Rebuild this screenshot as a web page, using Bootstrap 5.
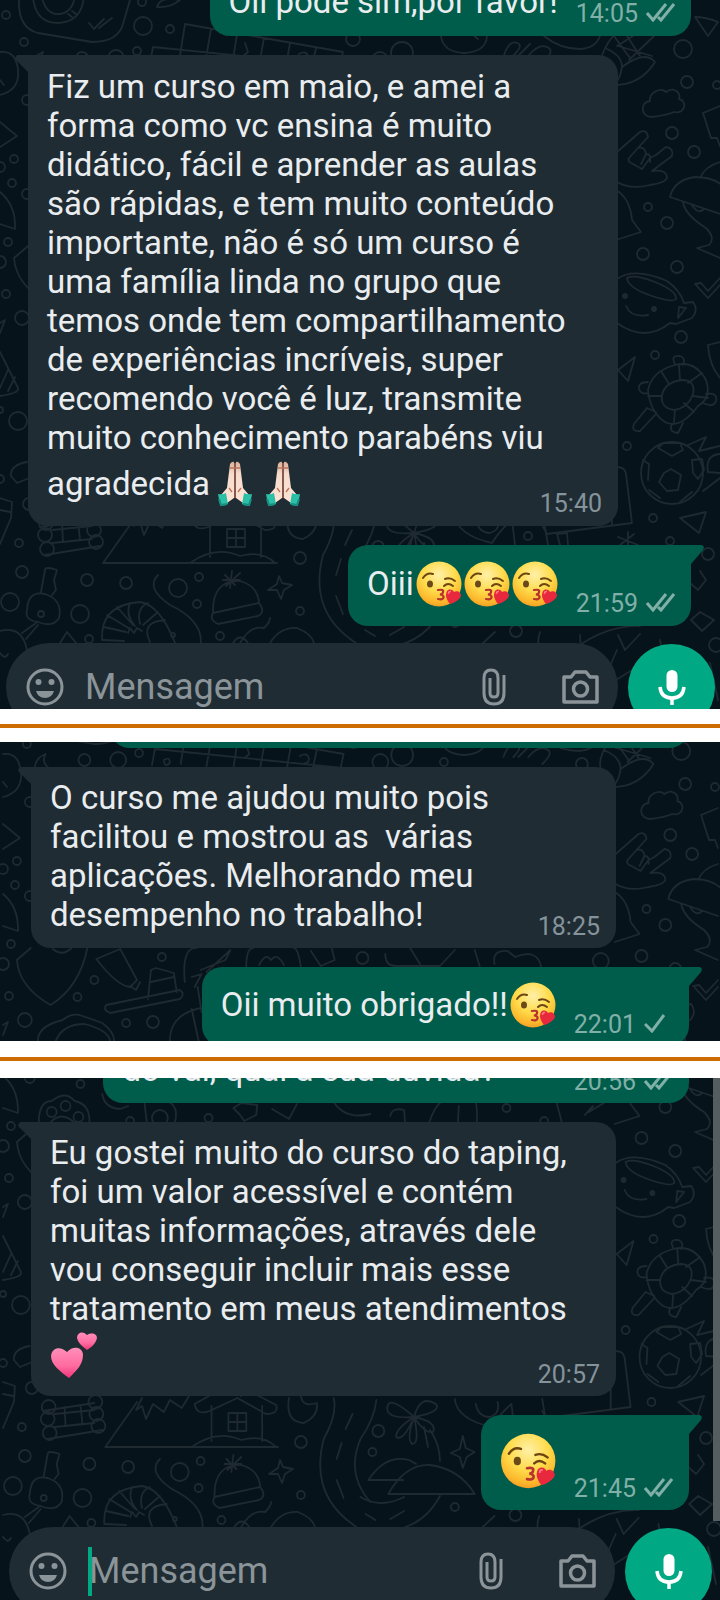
<!DOCTYPE html>
<html lang="pt-BR">
<head>
<meta charset="utf-8">
<meta name="viewport" content="width=device-width, initial-scale=1">
<title>Depoimentos</title>
<link href="https://cdn.jsdelivr.net/npm/bootstrap@5.3.0/dist/css/bootstrap.min.css" rel="stylesheet">
<style>
  body { font-family: Roboto, "Noto Sans", sans-serif; background: #fff; }
  .chat { background: #07131a; color: #e9edef; padding: 0 29px 0 28px; gap: 19px; --pt: 12px; --pb: 15px; }
  .chat-b { --pt: 11px; --pb: 14px; padding: 0 31px; }
  .wall { inset: 0; width: 100%; height: 100%; z-index: 0; }
  .bubble { border-radius: 20px; padding: var(--pt) 19px var(--pb); font-size: 33px; line-height: 39px; z-index: 1; }
  .received { background: #202c33; margin-right: 73px; padding-right: 16px; }
  .sent { background: #005c4b; padding-right: 16px; column-gap: 18px; }
  .tail-in { border-top-left-radius: 0; }
  .tail-in::before, .tail-out::after { content: ""; position: absolute; top: 0; width: 15px; height: 19px; background: inherit; }
  .tail-in::before { left: -13px; clip-path: polygon(0 3px, 2px 0, 15px 0, 15px 19px, 12px 16px, 1px 5px); }
  .tail-out { border-top-right-radius: 0; }
  .tail-out::after { right: -13px; clip-path: polygon(0 0, 13px 0, 15px 2px, 14px 5px, 2px 19px, 0 19px); }
  .meta { font-size: 25px; line-height: 26px; margin-bottom: -6px; color: #85939b; gap: 8px; }
  .sent .meta { color: #80b0a7; }
  .ticks { width: 29px; height: 20px; margin-bottom: 4px; fill: none; stroke: currentColor; stroke-width: 3; }
  .emo { width: 48px; height: 46px; margin: 4px 0; vertical-align: -16px; }
  .emo-lg { width: 58px; height: 58px; margin: 6px 0 6px -2px; display: block; }
  .wide { min-width: 88%; }
  .wider { min-width: 89%; }
  .cut-a { margin-top: -30px; }
  .cut-b { margin-top: -58px; height: 64px; }
  .cut-c { margin-top: -39px; }
  .cut-end { margin-bottom: -5px; }
  .composer { margin: -2px -24px -22px -22px; gap: 10px; z-index: 1; }
  .chat-b .composer { margin: -2px -23px -13px -22px; }
  .field { background: #202c33; border-radius: 44px; height: 88px; padding: 0 19px 0 20px; min-width: 0; }
  .ico { border: 0; background: none; padding: 0; color: #8a9499; line-height: 0; }
  .ico svg { fill: none; stroke: currentColor; display: block; }
  .msg { font-size: 36px; line-height: 42px; border: 0; background: transparent; padding: 0; margin-left: 21px; width: 0; min-width: 0; color: #e9edef; outline: 0; }
  .msg::placeholder { color: #8a9499; opacity: 1; }
  .clip { margin-right: 56px; }
  .mic { width: 87px; height: 87px; background: #00a884; border: 0; padding: 0; }
  .caret { width: 4px; height: 49px; background: #00a884; margin-left: 21px; z-index: 1; }
  .caret + .msg { margin-left: -3px; }
  .scroller { width: 7px; top: 0; right: 0; bottom: 81px; background: #565d61; z-index: 2; }
  .rule { height: 4px; background: #cc6c02; border: 0; opacity: 1; margin: 15px 0 14px; }
  .rule-b { margin: 16px 0 17px; }
</style>
</head>
<body>
<svg width="0" height="0" class="position-absolute" aria-hidden="true">
  <defs>
    <radialGradient id="face" cx="50%" cy="30%" r="72%"><stop offset="0" stop-color="#fff0a8"/><stop offset=".5" stop-color="#ffdc4c"/><stop offset=".85" stop-color="#fcb52a"/><stop offset="1" stop-color="#f09a25"/></radialGradient>
    <linearGradient id="pink" x1="0" y1="0" x2="0" y2="1"><stop offset="0" stop-color="#ff8fba"/><stop offset=".6" stop-color="#ff6b9f"/><stop offset="1" stop-color="#f2347c"/></linearGradient>
    <linearGradient id="skin" x1="0" y1="0" x2="0" y2="1"><stop offset="0" stop-color="#dcae98"/><stop offset=".3" stop-color="#f7dccd"/><stop offset="1" stop-color="#fde3d3"/></linearGradient>
    <symbol id="kiss" viewBox="0 0 48 46">
      <circle cx="25" cy="23" r="22.5" fill="url(#face)"/>
      <g fill="none" stroke="#6b4412" stroke-width="2" stroke-linecap="round"><path d="M9 17Q13 11 19 13M31 18Q36 16 41 20M30 25Q34 21 39 25"/></g>
      <ellipse cx="16" cy="23" rx="3" ry="3.6" fill="#6b4a1a"/>
      <path d="M24 29Q30 28 29 31Q29 33 26 33.500Q30 34 29.500 36.500Q29 39 24 38" fill="none" stroke="#b8322f" stroke-width="2.200" stroke-linecap="round"/>
      <path d="M36 43C32 38 31 34 33 30C36 27 39 29 40 31C43 29 47 31 47 35C46 38 41 42 36 43Z" fill="#e8283d"/>
      <path d="M34.500 33Q34.500 30 37 30.500" fill="none" stroke="#ff7a85" stroke-width="1.500"/>
    </symbol>
    <symbol id="pray" viewBox="0 0 48 46">
      <path d="M24 1V37L17 42L11 34L17 27L20 3Q22 0 24 1Z" fill="url(#skin)"/>
      <path d="M26 1V37L33 42L39 34L33 27L30 3Q28 0 26 1Z" fill="url(#skin)"/>
      <path d="M25 2V37M20 7H30M19 27L22 31M31 27L28 31" stroke="#b9735a" stroke-width="1.300" fill="none"/>
      <path d="M8 33Q12 34 16 32L18 43Q13 46 10 44Z" fill="#2cc0a8"/><path d="M42 33Q38 34 34 32L32 43Q37 46 40 44Z" fill="#2cc0a8"/>
      <path d="M9 38L11 44L17 43M41 38L39 44L33 43" stroke="#158f80" stroke-width="2" fill="none"/>
    </symbol>
    <symbol id="hearts" viewBox="0 0 48 46">
      <path d="M19 46C10 39 1 33 1 24C2 15 11 14 17 20C23 13 33 15 33 23C33 33 26 39 19 46Z" fill="url(#pink)"/>
      <path d="M37 18C32 14 27 10 27 5C28 0 33-1 37 3C42 0 47 2 47 6C46 11 42 15 37 18Z" fill="url(#pink)"/>
    </symbol>
    <symbol id="tick2" viewBox="0 0 29 20"><path d="M1 11L7 18L20 2M12 15L15 18L28 2"/></symbol>
    <symbol id="tick1" viewBox="0 0 29 20"><path d="M1 11L8 18L20 2"/></symbol>

    <!-- wallpaper doodles -->
    <g id="doodles" fill="none" stroke="#1e2a30" stroke-width="1.800" stroke-linejoin="round" stroke-linecap="round">
      <g id="dots">
        <circle cx="6" cy="15" r="4"/><circle cx="24" cy="42" r="4"/><circle cx="143" cy="26" r="9"/><circle cx="142" cy="2" r="4"/><circle cx="170" cy="29" r="4"/><circle cx="137" cy="51" r="4"/><circle cx="82" cy="58" r="6"/><circle cx="116" cy="58" r="8"/>
        <circle cx="353" cy="39" r="7"/><circle cx="380" cy="60" r="8"/><circle cx="402" cy="53" r="11"/><circle cx="444" cy="60" r="4"/><circle cx="583" cy="62" r="6"/>
        <circle cx="27" cy="100" r="5"/><circle cx="14" cy="159" r="4"/><circle cx="0" cy="167" r="5"/><circle cx="12" cy="183" r="4"/><circle cx="27" cy="194" r="5"/><circle cx="8" cy="242" r="4"/><circle cx="0" cy="262" r="6"/><circle cx="6" cy="294" r="4"/><circle cx="22" cy="318" r="7"/>
        <circle cx="160" cy="255" r="4"/><circle cx="92" cy="278" r="4"/><circle cx="75" cy="295" r="4"/><circle cx="124" cy="321" r="4"/><circle cx="151" cy="320" r="6"/><circle cx="78" cy="200" r="4"/><circle cx="128" cy="237" r="4"/><circle cx="207" cy="234" r="4"/><circle cx="507" cy="224" r="4"/><circle cx="545" cy="237" r="4"/><circle cx="362" cy="256" r="6"/><circle cx="602" cy="259" r="8"/>
        <circle cx="18" cy="421" r="9"/><circle cx="0" cy="410" r="3"/><circle cx="29" cy="504" r="6"/><circle cx="0" cy="479" r="4"/><circle cx="19" cy="543" r="4"/><circle cx="22" cy="572" r="6"/><circle cx="10" cy="602" r="9"/><circle cx="87" cy="580" r="6"/><circle cx="80" cy="614" r="9"/><circle cx="126" cy="583" r="6"/><circle cx="178" cy="588" r="9"/><circle cx="199" cy="577" r="4"/><circle cx="197" cy="604" r="4"/><circle cx="300" cy="558" r="6"/><circle cx="300" cy="611" r="4"/><circle cx="220" cy="636" r="4"/><circle cx="89" cy="639" r="4"/>
        <circle cx="683" cy="49" r="9"/><circle cx="687" cy="82" r="6"/><circle cx="717" cy="85" r="4"/><circle cx="672" cy="133" r="6"/><circle cx="694" cy="152" r="6"/><circle cx="648" cy="207" r="4"/><circle cx="667" cy="223" r="6"/><circle cx="643" cy="254" r="6"/><circle cx="677" cy="267" r="6"/><circle cx="681" cy="337" r="6"/><circle cx="655" cy="355" r="4"/><circle cx="627" cy="446" r="4"/><circle cx="653" cy="518" r="4"/><circle cx="708" cy="554" r="6"/><circle cx="528" cy="536" r="4"/><circle cx="378" cy="547" r="6"/><circle cx="372" cy="568" r="4"/><circle cx="455" cy="623" r="4"/><circle cx="516" cy="631" r="6"/><circle cx="716" cy="645" r="7"/><circle cx="670" cy="541" r="4"/>
      </g>
      <path d="M19 0Q18 28 38 33L92 42Q118 42 123 24L130 0M33-2Q36 23 58 23Q82 22 84-4M42-2Q46 14 58 14Q72 14 75-4M68 14L72 17M72 11L76 14M89 23L94 29L104 19M99 28L112 18M157 7Q160-4 180 0Q170 8 157 7Z"/>
      <path d="M153 47L150 63M153 47L343 66M185 24L179 62M185 24L343 52L340 66M211 29L205 64M237 34L232 66M264 38L259 66M290 43L286 66M316 48L312 66M245 43L248 52L243 56M299 54Q306 50 308 56Q309 61 302 62M162 58Q168 54 168 61Q163 66 162 59"/>
      <path d="M43 52Q32 56 32 67M43 52Q38 60 47 67M441 36Q443 52 464 53Q486 52 487 36M472 34L478 39M504 55Q510 38 519 44Q522 47 514 55M519 55L530 44M529 55Q540 42 549 48Q554 52 543 62M544 36Q560 49 580 49Q596 48 600 36"/>
      <path d="M613 36Q590 65 612 80M605 48Q622 55 622 67Q645 50 655 62Q640 86 612 85M622 67Q620 80 614 84M627 36L640 56M618 46L652 56M633 36L617 46M654 36L629 60M614 36L630 58"/>
      <path d="M695 17Q706 17 718 22L708 36Z"/>
      <path d="M652 117C640 117 640 102 650 101C649 92 661 87 666 92C674 86 681 93 679 99C688 101 685 115 674 112C667 115 660 116 652 117Z"/>
      <path d="M617 152L640 132Q647 129 648 137L637 149L629 158Q627 162 633 164L642 169L650 158L656 155L666 147Q674 148 672 156L652 171Q667 169 667 178Q665 183 650 185Q630 190 617 182M638 148Q645 146 646 154L641 164M646 154Q652 154 650 162"/>
      <path d="M703 113L720 106M703 113L711 138H717L720 146M670 197Q674 180 695 177Q713 177 723 186M670 197L720 214M700 178Q705 166 720 162M683 202Q685 215 706 228Q716 238 709 245L697 248L720 258M692 205Q698 215 704 209"/>
      <path d="M616 190Q630 198 632 220L641 232L616 240M0 52Q16 50 18 70Q20 90 0 95M0 122L17 136L0 147M0 192Q16 205 15 229L0 224M0 80L4 85"/>
      <path d="M28 246L14 258Q16 285 48 303Q77 285 85 246M50 247Q60 255 69 246M94 257L118 247L135 278L128 285Q115 284 94 257M128 284L134 288L138 280M104 303L178 288Q184 292 178 297L108 311Q100 308 104 303M146 297L149 268L154 266L172 271L175 290M149 280L172 275M183 280Q180 245 195 246M193 285L200 272L190 275M200 310L196 285M168 339Q168 310 205 305M190 307L197 339M205 270L229 248L224 258L199 268"/>
      <path d="M35 339Q35 324 60 318Q70 310 80 314L100 321Q112 330 112 339M53 339Q60 322 82 322Q106 328 108 339M245 265Q245 246 252 246M300 265Q297 246 293 246M258 263Q264 250 270 258Q276 250 283 263M310 249L320 264L334 258L331 246M385 252Q385 264 395 264L440 264L455 248M410 246L420 262M475 248L480 264M495 262Q492 248 508 249L516 255M516 255Q538 246 542 265"/>
      <path d="M36 239Q36 217 49 217Q63 206 72 217Q88 220 87 239M47 239Q59 226 72 239"/><circle cx="49" cy="228" r="5"/><circle cx="63" cy="222" r="5"/><circle cx="76" cy="233" r="5"/><path d="M100 210Q102 224 118 225L126 222M142 215L145 240M147 217Q180 212 173 239M232 224L240 219L256 221L255 231L243 237L238 230ZM271 225L288 235L296 220M333 218Q345 236 370 230"/><circle cx="158" cy="234" r="8"/>
      <path d="M429 239Q435 222 441 218M477 240Q478 225 476 218M458 240L459 222M390 232Q392 223 404 226L405 240M557 217L563 239M586 231Q600 215 590 228L605 219"/>
      <path d="M617 279Q634 267 667 281Q680 290 684 303L693 302Q699 310 692 318L676 324L670 323Q645 343 617 323M627 278Q628 288 652 296Q673 303 676 299Q677 291 655 282Q634 274 627 278M626 306Q631 318 648 315M679 307L686 308L678 318Z"/><circle cx="625" cy="296" r="2" fill="#1d292f"/><circle cx="654" cy="309" r="2" fill="#1d292f"/>
      <path d="M695 284L701 283L708 291L720 278M695 284L708 298L720 285M618 370L635 357L628 381Z"/>
      <path d="M648 390Q652 371 675 365Q695 360 706 380Q712 398 698 406Q680 430 665 422Q650 412 648 390ZM662 395Q665 382 682 380Q696 380 693 394Q688 408 674 410Q660 408 662 395ZM648 396L662 396M661 371L669 384M679 365L680 380M702 373L688 383M708 398L693 396M694 412L684 403M674 422L675 410M675 364Q670 355 680 356Q686 358 683 365M648 382Q638 382 639 389Q641 395 648 393M656 412L647 408L634 424Q631 432 640 431L656 414M672 424Q668 432 678 433L683 423M706 394Q718 392 716 401Q714 408 703 403M708 345Q709 365 720 378M708 345L720 342"/>
      <circle cx="672" cy="473" r="31"/><path d="M664 473L671 469L681 475L678 490L667 491L659 482ZM658 448L663 443H680L683 450L672 456ZM643 460L649 464L648 480M692 460L702 459L704 470L698 479L693 473ZM649 490L660 498M680 502L692 492M688 445L706 437L699 451L720 446M703 491L720 478M720 454Q705 455 708 472L720 473"/>
      <path d="M617 467Q625 467 626 474L632 523L547 534L543 527M612 500V524M680 518L706 512L699 533ZM618 537L638 545M628 532V545M620 545L634 534"/>
      <path d="M0 352L18 388Q20 393 0 396M0 388L8 370M8 391L15 377M11 476Q10 465 27 462M11 476L17 483L32 477M0 498L12 502L11 518L0 544M0 510L10 512M0 333L5 320L0 323"/>
      <path d="M40 527L92 519M45 555L100 546M62 523L63 542L80 540L78 521M52 530L92 526M52 543L92 539"/><circle cx="46" cy="523" r="7"/><circle cx="45" cy="535" r="7"/><circle cx="47" cy="549" r="7"/><circle cx="93" cy="518" r="7"/><circle cx="94" cy="530" r="7"/><circle cx="96" cy="542" r="7"/>
      <path d="M135 518L103 563H277M140 514L134 526L140 522L144 535L151 520L162 528L168 516L180 524L188 511M210 557V522M261 557V522M193 520L225 502L240 512M193 520Q195 532 208 527L236 514L265 530Q278 530 275 521L250 508M227 529H245V547H227ZM236 529V547M227 538H245M190 563Q215 545 240 556Q262 550 275 563M288 514Q284 538 303 539Q318 532 316 519Q300 524 300 510"/>
      <path d="M45 570Q45 566 57 570L54 580L56 590L52 595M45 570L41 592M27 610Q28 590 45 594Q63 600 59 618Q53 628 38 622Q24 620 27 610M36 623L22 633M38 625L26 639M0 631Q22 625 27 650M0 653Q5 660 8 654M60 643L67 632L76 643"/><circle cx="41" cy="614" r="3"/>
      <path d="M102 640Q100 605 140 602Q160 605 175 643M104 627L126 632M107 615L130 629M117 607L133 625M130 603Q125 615 135 626M148 603Q136 608 140 624M158 612L143 625M165 620Q140 622 150 642M103 640L124 641M128 633L130 628L134 633L137 628L142 631M158 575Q145 588 170 605Q202 620 201 643"/><circle cx="173" cy="635" r="2"/>
      <path d="M213 613Q212 580 240 581Q258 586 259 603M213 613L259 603Q266 612 258 616L218 624Q209 620 213 613M225 575L235 585M223 580H240M232 571L230 588M240 573L226 586M279 576L282 583L292 585L284 590L281 599L277 590L268 590L277 584ZM240 643Q250 625 264 628Q270 622 270 618M270 643Q280 627 297 628Q312 634 314 643M233 643Q240 632 248 643"/>
      <path d="M333 514Q337 530 323 555Q308 612 356 643M352 530L345 545M341 559L336 575M336 596L343 614M376 516Q374 535 360 555Q345 590 370 618"/>
      <path d="M414 533Q420 510 436 520Q442 528 414 533Q388 510 387 524Q386 535 414 533Q395 545 396 553Q403 558 414 533Q406 555 412 560Q420 560 414 533Q425 550 433 548Q438 538 414 533M424 543L428 563M430 546Q440 560 440 577M368 596Q385 570 409 576L416 580M368 596H403M388 610Q405 580 430 581Q460 585 475 610ZM360 613Q380 625 404 613M365 630L375 636M390 635L404 627M370 648Q420 650 440 612M463 552L466 564L475 568L467 573L463 584L460 573L451 569L460 565ZM455 515Q457 535 492 543Q500 530 512 520M476 520Q479 533 490 533Q501 530 498 518M512 520L515 545M543 515L548 545M560 545L557 534L567 533L568 545"/>
      <path d="M700 571L706 580L698 590L690 583M700 612L714 620L702 631L691 620ZM560 660Q600 625 640 626M580 635L582 670M495 632L470 655M540 632Q534 650 548 650M618 635L625 650L640 634M660 640L665 670M600 690L640 665L690 690M617 650L595 700M710 663L718 700"/>
    </g>
  </defs>
</svg>

<main class="container-fluid p-0">
  <section class="chat position-relative overflow-hidden d-flex flex-column align-items-stretch">
    <svg class="wall position-absolute" aria-hidden="true"><use href="#doodles"/></svg>

    <div class="bubble sent cut-a position-relative d-flex align-items-end align-self-end">
      <div>Oii pode sim,por favor!</div>
      <div class="meta d-flex align-items-center"><time>14:05</time><svg class="ticks"><use href="#tick2"/></svg></div>
    </div>

    <div class="bubble received tail-in position-relative">
      <div>Fiz um curso em maio, e amei a<br>forma como vc ensina é muito<br>didático, fácil e aprender as aulas<br>são rápidas, e tem muito conteúdo<br>importante, não é só um curso é<br>uma família linda no grupo que<br>temos onde tem compartilhamento<br>de experiências incríveis, super<br>recomendo você é luz, transmite<br>muito conhecimento parabéns viu</div>
      <div class="d-flex justify-content-between align-items-end">
        <div>agradecida<svg class="emo" role="img" aria-label="mãos em oração"><use href="#pray"/></svg><svg class="emo" role="img" aria-label="mãos em oração"><use href="#pray"/></svg></div>
        <time class="meta">15:40</time>
      </div>
    </div>

    <div class="bubble sent tail-out position-relative d-flex align-items-end align-self-end">
      <div>Oiii<svg class="emo" role="img" aria-label="beijo"><use href="#kiss"/></svg><svg class="emo" role="img" aria-label="beijo"><use href="#kiss"/></svg><svg class="emo" role="img" aria-label="beijo"><use href="#kiss"/></svg></div>
      <div class="meta d-flex align-items-center"><time>21:59</time><svg class="ticks"><use href="#tick2"/></svg></div>
    </div>

    <form class="composer position-relative d-flex align-items-center">
      <div class="field d-flex align-items-center flex-grow-1">
        <button type="button" class="ico" aria-label="Emoji"><svg width="38" height="38" viewBox="0 0 38 38" stroke-width="3"><circle cx="19" cy="19" r="17"/><g fill="currentColor" stroke="none"><circle cx="12.500" cy="14" r="3"/><circle cx="25.500" cy="14" r="3"/><path d="M10 23H28Q26 30 19 30Q12 30 10 23Z"/></g></svg></button>
        <input class="msg flex-grow-1" type="text" placeholder="Mensagem" aria-label="Mensagem">
        <button type="button" class="ico clip" aria-label="Anexar"><svg width="24" height="38" viewBox="0 0 24 38" stroke-width="3"><path d="M22 7V25Q22 36 12 36Q2 36 2 25V10Q2 2 9 2Q16 2 16 10V25Q16 29 12 29Q8 29 8 25V10"/></svg></button>
        <button type="button" class="ico" aria-label="Câmera"><svg width="37" height="34" viewBox="0 0 37 34" stroke-width="3.500" stroke-linejoin="round"><path d="M2 7H9L13 2H24L28 7H35V32H2Z"/><circle cx="18.500" cy="19" r="7"/></svg></button>
      </div>
      <button type="button" class="mic rounded-circle flex-shrink-0 d-flex align-items-center justify-content-center" aria-label="Gravar áudio"><svg width="28" height="38" viewBox="0 0 28 38"><rect x="8.500" y="2" width="11" height="22" rx="5.500" fill="#fff"/><path d="M2 19Q3 30 14 30Q25 30 26 19M14 30V37" fill="none" stroke="#fff" stroke-width="3.500"/></svg></button>
    </form>
  </section>

  <hr class="rule">

  <section class="chat chat-b position-relative overflow-hidden d-flex flex-column align-items-stretch">
    <svg class="wall position-absolute" aria-hidden="true"><use href="#doodles" transform="translate(3 -40) scale(.993 1)"/></svg>
    <div class="bubble sent cut-b wide position-relative align-self-end"></div>

    <div class="bubble received tail-in position-relative">
      <div>O curso me ajudou muito pois<br>facilitou e mostrou as&nbsp; várias<br>aplicações. Melhorando meu</div>
      <div class="d-flex justify-content-between align-items-end">
        <div>desempenho no trabalho!</div>
        <time class="meta">18:25</time>
      </div>
    </div>

    <div class="bubble sent tail-out cut-end position-relative d-flex align-items-end align-self-end">
      <div>Oii muito obrigado!!<svg class="emo" role="img" aria-label="beijo"><use href="#kiss"/></svg></div>
      <div class="meta d-flex align-items-center"><time>22:01</time><svg class="ticks"><use href="#tick1"/></svg></div>
    </div>
  </section>

  <hr class="rule rule-b">

  <section class="chat chat-b position-relative overflow-hidden d-flex flex-column align-items-stretch">
    <svg class="wall position-absolute" aria-hidden="true"><use href="#doodles" transform="translate(3 -194) scale(.993 1)"/></svg>
    <div class="bubble sent cut-c wider position-relative d-flex justify-content-between align-items-end align-self-end">
      <div>do vai, qual a sua dúvida?</div>
      <div class="meta d-flex align-items-center"><time>20:56</time><svg class="ticks"><use href="#tick2"/></svg></div>
    </div>

    <div class="bubble received tail-in position-relative">
      <div>Eu gostei muito do curso do taping,<br>foi um valor acessível e contém<br>muitas informações, através dele<br>vou conseguir incluir mais esse<br>tratamento em meus atendimentos</div>
      <div class="d-flex justify-content-between align-items-end">
        <div><svg class="emo" role="img" aria-label="dois corações"><use href="#hearts"/></svg></div>
        <time class="meta">20:57</time>
      </div>
    </div>

    <div class="bubble sent tail-out position-relative d-flex align-items-end align-self-end">
      <div><svg class="emo-lg" role="img" aria-label="beijo"><use href="#kiss"/></svg></div>
      <div class="meta d-flex align-items-center"><time>21:45</time><svg class="ticks"><use href="#tick2"/></svg></div>
    </div>

    <form class="composer position-relative d-flex align-items-center">
      <div class="field d-flex align-items-center flex-grow-1">
        <button type="button" class="ico" aria-label="Emoji"><svg width="38" height="38" viewBox="0 0 38 38" stroke-width="3"><circle cx="19" cy="19" r="17"/><g fill="currentColor" stroke="none"><circle cx="12.500" cy="14" r="3"/><circle cx="25.500" cy="14" r="3"/><path d="M10 23H28Q26 30 19 30Q12 30 10 23Z"/></g></svg></button>
        <span class="caret"></span>
        <input class="msg flex-grow-1" type="text" placeholder="Mensagem" aria-label="Mensagem">
        <button type="button" class="ico clip" aria-label="Anexar"><svg width="24" height="38" viewBox="0 0 24 38" stroke-width="3"><path d="M22 7V25Q22 36 12 36Q2 36 2 25V10Q2 2 9 2Q16 2 16 10V25Q16 29 12 29Q8 29 8 25V10"/></svg></button>
        <button type="button" class="ico" aria-label="Câmera"><svg width="37" height="34" viewBox="0 0 37 34" stroke-width="3.500" stroke-linejoin="round"><path d="M2 7H9L13 2H24L28 7H35V32H2Z"/><circle cx="18.500" cy="19" r="7"/></svg></button>
      </div>
      <button type="button" class="mic rounded-circle flex-shrink-0 d-flex align-items-center justify-content-center" aria-label="Gravar áudio"><svg width="28" height="38" viewBox="0 0 28 38"><rect x="8.500" y="2" width="11" height="22" rx="5.500" fill="#fff"/><path d="M2 19Q3 30 14 30Q25 30 26 19M14 30V37" fill="none" stroke="#fff" stroke-width="3.500"/></svg></button>
    </form>
    <div class="scroller position-absolute"></div>
  </section>
</main>
<script src="https://cdn.jsdelivr.net/npm/bootstrap@5.3.0/dist/js/bootstrap.bundle.min.js"></script>
</body>
</html>
